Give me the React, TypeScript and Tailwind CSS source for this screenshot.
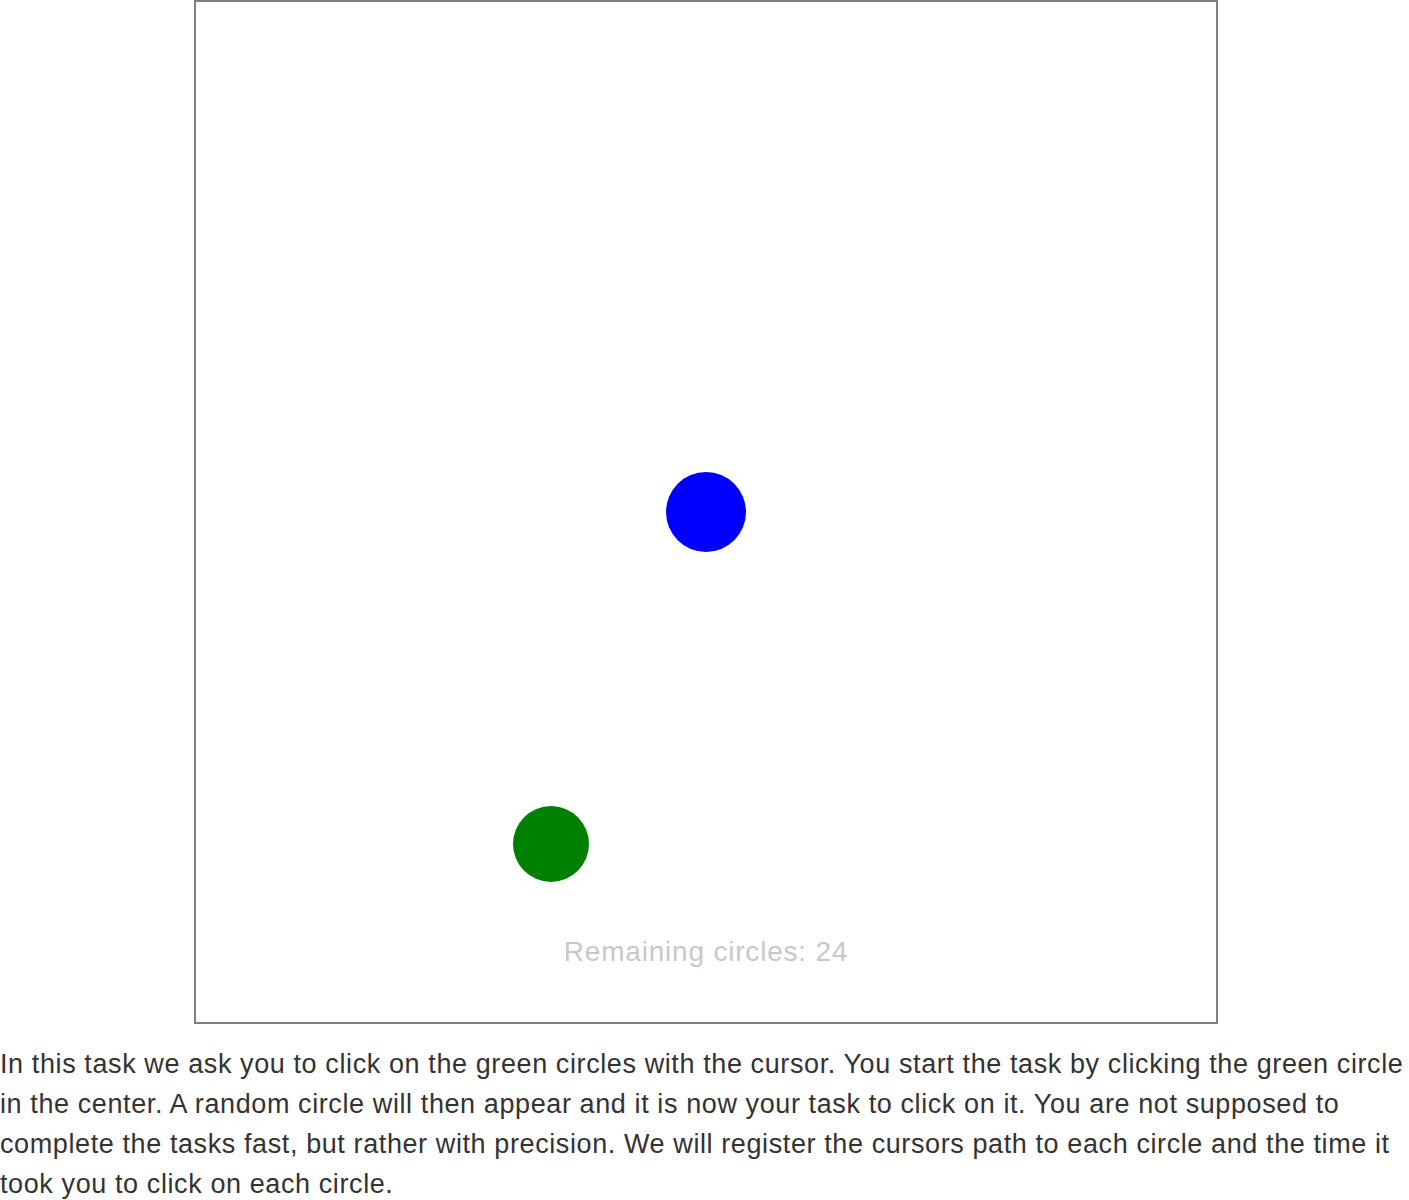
export default function App() {
  return (
    <div className="bg-white min-h-[1200px] font-['Liberation_Sans',Arial,sans-serif]">
      <div className="pl-[194px]">
        <div className="relative w-[1024px] h-[1024px] border-2 border-[#808080] bg-white">
          {/* target circle */}
          <div className="absolute left-[470px] top-[470px] w-[80px] h-[80px] rounded-full bg-[#0000ff]" />
          {/* start circle */}
          <div className="absolute left-[317px] top-[804px] w-[76px] h-[76px] rounded-full bg-[#008000]" />
          <div className="absolute left-0 right-0 top-[932px] text-center text-[28px] leading-[36px] tracking-[0.8px] text-[#c8c8c8]">
            Remaining circles: 24
          </div>
        </div>
      </div>
      <p className="mt-5 text-[27px] leading-[40px] tracking-[0.6px] text-[#333333]">
        In this task we ask you to click on the green circles with the cursor. You start the task by clicking the green circle in the center. A random circle will then appear and it is now your task to click on it. You are not supposed to complete the tasks fast, but rather with precision. We will register the cursors path to each circle and the time it took you to click on each circle.
      </p>
    </div>
  );
}
